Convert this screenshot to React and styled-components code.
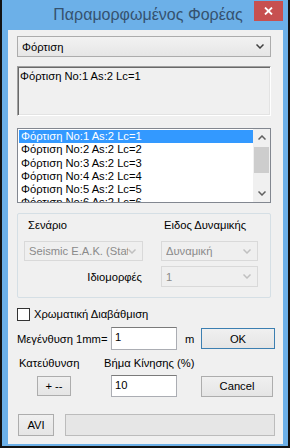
import React from 'react';
import styled, { createGlobalStyle } from 'styled-components';

const GlobalStyle = createGlobalStyle`
  html, body {
    margin: 0;
    padding: 0;
    background: #121212;
  }
  body {
    font-family: "Liberation Sans", Arial, sans-serif;
    font-size: 11.2px;
    color: #000;
  }
`;

const Window = styled.div`
  margin-left: 2px;
  width: 286px;
  height: 446px;
  box-sizing: border-box;
  padding: 0 5px 2px 6px;
  background: #6cb0e8;
  display: flex;
  flex-direction: column;
`;

const TitleBar = styled.div`
  height: 30px;
  display: flex;
  align-items: flex-start;
`;

const Title = styled.div`
  flex: 1;
  padding-left: 34px;
  text-align: center;
  font-size: 16px;
  line-height: 30px;
  color: #35526f;
`;

const CloseButton = styled.div`
  width: 29px;
  height: 20px;
  margin-top: 1px;
  background: #c75050;
  color: #fff;
  display: flex;
  align-items: center;
  justify-content: center;
`;

const Content = styled.div`
  flex: 1;
  background: #f0f0f0;
  padding: 6px 8px 0 9px;
  display: flex;
  flex-direction: column;
`;

const Combo = styled.div`
  box-sizing: border-box;
  width: ${p => p.$w || 254}px;
  height: ${p => p.$h || 21}px;
  border: 1px solid ${p => (p.$disabled ? '#d9d9d9' : '#acacac')};
  background: ${p => (p.$disabled ? '#efefef' : 'linear-gradient(#f2f2f2, #e6e6e6)')};
  color: ${p => (p.$disabled ? '#8a8a8a' : '#000')};
  display: flex;
  align-items: center;
  padding: 0 6px 0 4px;
  span {
    flex: 1;
    white-space: nowrap;
    overflow: hidden;
  }
`;

const ReadOnlyBox = styled.div`
  box-sizing: border-box;
  margin-top: 9px;
  width: 254px;
  height: 50px;
  border-top: 1px solid #a0a0a0;
  border-left: 1px solid #a0a0a0;
  border-right: 1px solid #fff;
  border-bottom: 1px solid #fff;
  box-shadow: inset 1px 1px 0 #696969, inset -1px -1px 0 #e3e3e3;
  padding: 3px 2px;
`;

const ListBox = styled.div`
  box-sizing: border-box;
  margin-top: 12px;
  width: 254px;
  height: 75px;
  border: 1px solid #828790;
  background: #fff;
  display: flex;
  overflow: hidden;
`;

const Items = styled.div`
  flex: 1;
  padding: 1px 0 0 1px;
  overflow: hidden;
`;

const Item = styled.div`
  height: 13.25px;
  line-height: 13px;
  padding-left: 2px;
  white-space: nowrap;
  background: ${p => (p.$selected ? '#3399ff' : 'transparent')};
  color: ${p => (p.$selected ? '#fff' : '#000')};
`;

const ScrollBar = styled.div`
  width: 17px;
  background: #f0f0f0;
  display: flex;
  flex-direction: column;
`;

const ScrollArrow = styled.div`
  height: 17px;
  display: flex;
  align-items: center;
  justify-content: center;
`;

const Thumb = styled.div`
  height: 26px;
  margin: 1px 1px 0 1px;
  background: #cdcdcd;
`;

const Track = styled.div`
  flex: 1;
`;

const GroupBox = styled.div`
  box-sizing: border-box;
  margin-top: 10px;
  width: 254px;
  height: 85px;
  border: 1px solid #d5dfe5;
  border-radius: 2px;
  padding: 4px 0 0 6px;
  display: grid;
  grid-template-columns: 119px 97px;
  grid-template-rows: 23px 25px 21px;
  column-gap: 18px;
`;

const GroupLabel = styled.div`
  height: 14px;
  line-height: 14px;
  padding-left: ${p => p.$indent || 0}px;
  text-align: ${p => (p.$right ? 'right' : 'left')};
  padding-right: ${p => (p.$right ? 1 : 0)}px;
  align-self: ${p => (p.$right ? 'center' : 'start')};
  white-space: nowrap;
`;

const CheckRow = styled.label`
  margin-top: 9px;
  height: 14px;
  display: flex;
  align-items: center;
  gap: 4px;
`;

const CheckBox = styled.span`
  box-sizing: border-box;
  width: 13px;
  height: 13px;
  border: 1px solid #333;
  background: #fff;
`;

const FormRow = styled.div`
  margin-top: ${p => p.$mt}px;
  height: ${p => p.$h}px;
  display: grid;
  grid-template-columns: 94px 66px 24px 74px;
  align-items: center;
`;

const Input = styled.div`
  box-sizing: border-box;
  height: ${p => p.$h}px;
  border: 1px solid #abadb3;
  border-top-color: #7a7a7a;
  background: #fff;
  padding: 3px 3px;
  line-height: 13px;
`;

const Unit = styled.div`
  padding-left: 8px;
`;

const Button = styled.div`
  box-sizing: border-box;
  width: ${p => p.$w}px;
  height: ${p => p.$h}px;
  margin-left: ${p => p.$ml || 0}px;
  border: 1px solid ${p => (p.$default ? '#3c7fb1' : '#adadad')};
  background: linear-gradient(#f0f0f0, #e5e5e5);
  display: flex;
  align-items: center;
  justify-content: center;
`;

const LabelsRow = styled.div`
  margin-top: 6px;
  height: 14px;
  display: grid;
  grid-template-columns: 85px auto;
  align-items: center;
  padding-left: 2px;
  white-space: nowrap;
`;

const BottomRow = styled.div`
  margin-top: 17px;
  height: 22px;
  display: flex;
  align-items: stretch;
  padding-left: 1px;
`;

const Progress = styled.div`
  flex: 1;
  margin-left: 11px;
  border: 1px solid #bcbcbc;
  background: #e6e6e6;
`;

const Chevron = ({ up, color = '#404040' }) => (
  <svg width="8" height="5" viewBox="0 0 8 5">
    <path
      d={up ? 'M0.5 4.5 L4 1 L7.5 4.5' : 'M0.5 0.5 L4 4 L7.5 0.5'}
      fill="none"
      stroke={color}
      strokeWidth="1.5"
    />
  </svg>
);

const items = [1, 2, 3, 4, 5, 6];

export default function App() {
  return (
    <>
      <GlobalStyle />
      <Window>
        <TitleBar>
          <Title>Παραμορφωμένος Φορέας</Title>
          <CloseButton>
            <svg width="9" height="8" viewBox="0 0 9 8">
              <path d="M1 0.5 L8 7.5 M8 0.5 L1 7.5" stroke="#fff" strokeWidth="1.8" />
            </svg>
          </CloseButton>
        </TitleBar>
        <Content>
          <Combo>
            <span>Φόρτιση</span>
            <Chevron />
          </Combo>
          <ReadOnlyBox>Φόρτιση No:1 As:2 Lc=1</ReadOnlyBox>
          <ListBox>
            <Items>
              {items.map(n => (
                <Item key={n} $selected={n === 1}>
                  Φόρτιση No:{n} As:2 Lc={n}
                </Item>
              ))}
            </Items>
            <ScrollBar>
              <ScrollArrow><Chevron up color="#606060" /></ScrollArrow>
              <Thumb />
              <Track />
              <ScrollArrow><Chevron color="#606060" /></ScrollArrow>
            </ScrollBar>
          </ListBox>
          <GroupBox>
            <GroupLabel $indent={4}>Σενάριο</GroupLabel>
            <GroupLabel $indent={3}>Ειδος Δυναμικής</GroupLabel>
            <Combo $disabled $w={119} $h={20}>
              <span>Seismic E.A.K. (Static)</span>
              <Chevron color="#c0c0c0" />
            </Combo>
            <Combo $disabled $w={97} $h={20}>
              <span>Δυναμική</span>
              <Chevron color="#c0c0c0" />
            </Combo>
            <GroupLabel $right>Ιδιομορφές</GroupLabel>
            <Combo $disabled $w={97} $h={21}>
              <span>1</span>
              <Chevron color="#c0c0c0" />
            </Combo>
          </GroupBox>
          <CheckRow>
            <CheckBox />
            Χρωματική Διαβάθμιση
          </CheckRow>
          <FormRow $mt={6} $h={23}>
            <div>Μεγένθυση 1mm=</div>
            <Input $h={23}>1</Input>
            <Unit>m</Unit>
            <Button $default $w={74} $h={21}>OK</Button>
          </FormRow>
          <LabelsRow>
            <div>Κατεύθυνση</div>
            <div>Βήμα Κίνησης (%)</div>
          </LabelsRow>
          <FormRow $mt={5} $h={22}>
            <Button $w={34} $h={20} $ml={20}>+ --</Button>
            <Input $h={22}>10</Input>
            <div />
            <Button $w={72} $h={21}>Cancel</Button>
          </FormRow>
          <BottomRow>
            <Button $w={36} $h={22}>AVI</Button>
            <Progress />
          </BottomRow>
        </Content>
      </Window>
    </>
  );
}
